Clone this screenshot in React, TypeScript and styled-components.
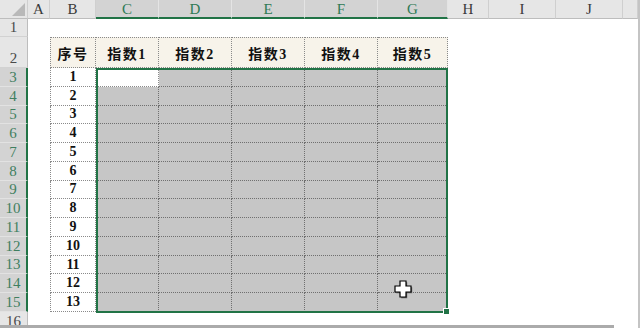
import React from 'react'
import styled, { createGlobalStyle } from 'styled-components';

const GlobalStyle = createGlobalStyle`
  html, body {
    margin: 0;
    padding: 0;
    background: #ffffff;
  }
`;

const GREEN = '#217346';

const Frame = styled.div`
  width: 640px;
  height: 328px;
  display: flex;
  flex-direction: column;
  overflow: hidden;
  background: #fff;
  font-family: "Liberation Serif", "Noto Sans CJK SC", serif;
`;

const Sheet = styled.div`
  position: relative;
  display: grid;
  grid-template-columns: 28px 22px 46px 63px 73px 73px 73px 70px 41px 67px 67px 1fr;
  grid-template-rows: 19px 18px 31px repeat(13, 18.77px) 1fr;
  height: 325px;
  border-right: 2px solid #c4c4c4;
  overflow: hidden;
`;

const Corner = styled.div`
  grid-column: 1;
  grid-row: 1;
  background: #e6e6e6;
  border-right: 1px solid #cfcfcf;
  border-bottom: 1px solid #bdbdbd;
`;

const ColHead = styled.div<{ $col: number; $sel?: boolean }>`
  grid-column: ${p => p.$col};
  grid-row: 1;
  display: flex;
  align-items: center;
  justify-content: center;
  background: ${p => (p.$sel ? '#d3d3d3' : '#e6e6e6')};
  border-right: 1px solid ${p => (p.$sel ? '#e4e4e4' : '#cfcfcf')};
  border-bottom: ${p => (p.$sel ? `2px solid ${GREEN}` : '1px solid #bdbdbd')};
  color: ${p => (p.$sel ? '#2f7a55' : '#3a3a3a')};
  font-size: 15px;
  line-height: 1;
  padding-top: ${p => (p.$sel ? '1px' : '0')};
`;

const RowHead = styled.div<{ $row: number; $sel?: boolean; $top?: boolean }>`
  grid-column: 1;
  grid-row: ${p => p.$row};
  display: flex;
  align-items: ${p => (p.$top ? 'flex-start' : 'flex-end')};
  justify-content: center;
  padding-bottom: ${p => (p.$top ? '0' : '1px')};
  padding-top: ${p => (p.$top ? '2px' : '0')};
  background: ${p => (p.$sel ? '#d3d3d3' : '#e6e6e6')};
  border-bottom: 1px solid ${p => (p.$sel ? '#e2e2e2' : '#d2d2d2')};
  border-right: ${p => (p.$sel ? `2px solid ${GREEN}` : '1px solid #bdbdbd')};
  color: ${p => (p.$sel ? '#3f7f60' : '#4a4a4a')};
  font-size: 15px;
  line-height: 1;
`;

const TCell = styled.div<{ $col: number; $row: number; $fill: 'white' | 'gray' | 'cream' }>`
  grid-column: ${p => p.$col};
  grid-row: ${p => p.$row};
  display: flex;
  align-items: center;
  justify-content: center;
  background: ${p => (p.$fill === 'gray' ? '#c6c6c6' : p.$fill === 'cream' ? '#f7f3ea' : '#ffffff')};
  border-right: 1px dotted ${p => (p.$fill === 'gray' ? '#6f6f6f' : '#8a8a8a')};
  border-bottom: 1px dotted ${p => (p.$fill === 'gray' ? '#6f6f6f' : '#8a8a8a')};
  border-left: ${p => (p.$col === 3 ? '1px dotted #8a8a8a' : 'none')};
  border-top: ${p => (p.$row === 3 ? '1px dotted #8a8a8a' : 'none')};
  color: #111;
  font-size: 14px;
  font-weight: bold;
  letter-spacing: ${p => (p.$row === 3 ? '1.5px' : '0')};
`;

const SelBox = styled.div`
  grid-column: 4 / 9;
  grid-row: 4 / 17;
  position: relative;
  border: 2px solid ${GREEN};
  margin: 0 0 -1px 0;
  pointer-events: none;
`;

const FillHandle = styled.div`
  position: absolute;
  right: -4px;
  bottom: -4px;
  width: 5px;
  height: 5px;
  background: ${GREEN};
  border: 1px solid #fff;
`;

const Cursor = styled.svg`
  position: absolute;
  left: 394px;
  top: 280px;
`;

const ScrollTrack = styled.div`
  height: 3px;
  display: flex;
  border-right: 2px solid #c4c4c4;
`;

const ScrollThumb = styled.div`
  width: 614px;
  background: #ababab;
`;

const columns = ['A', 'B', 'C', 'D', 'E', 'F', 'G', 'H', 'I', 'J', ''];
const heads = ['序号', '指数1', '指数2', '指数3', '指数4', '指数5'];

export default function App() {
  const rows = Array.from({ length: 16 }, (_, i) => i + 1);
  const dataRows = Array.from({ length: 13 }, (_, i) => i);

  return (
    <Frame>
      <GlobalStyle />
      <Sheet>
        <Corner>
          <svg width="27" height="18" viewBox="0 0 27 18">
            <polygon points="25,3 25,16 12,16" fill="#b9b9b9" />
          </svg>
        </Corner>
        {columns.map((c, i) => (
          <ColHead key={'c' + i} $col={i + 2} $sel={i >= 2 && i <= 6}>{c}</ColHead>
        ))}
        {rows.map(r => (
          <RowHead key={'r' + r} $row={r + 1} $sel={r >= 3 && r <= 15} $top={r === 16}>{r}</RowHead>
        ))}

        {heads.map((h, i) => (
          <TCell key={'h' + i} $col={i + 3} $row={3} $fill="cream">{h}</TCell>
        ))}
        {dataRows.map(r => (
          <React.Fragment key={'d' + r}>
            <TCell $col={3} $row={r + 4} $fill="white">{r + 1}</TCell>
            {[4, 5, 6, 7, 8].map(c => (
              <TCell key={c} $col={c} $row={r + 4} $fill={r === 0 && c === 4 ? 'white' : 'gray'} />
            ))}
          </React.Fragment>
        ))}

        <SelBox>
          <FillHandle />
        </SelBox>

        <Cursor width="19" height="19" viewBox="0 0 19 19">
          <polygon
            points="6,1 12,1 12,6 17,6 17,12 12,12 12,17 6,17 6,12 1,12 1,6 6,6"
            transform="translate(1.2,1.2)"
            fill="#666"
          />
          <polygon
            points="6,1 12,1 12,6 17,6 17,12 12,12 12,17 6,17 6,12 1,12 1,6 6,6"
            fill="#fff"
            stroke="#000"
            strokeWidth="1.2"
          />
        </Cursor>
      </Sheet>
      <ScrollTrack>
        <ScrollThumb />
      </ScrollTrack>
    </Frame>
  );
}
